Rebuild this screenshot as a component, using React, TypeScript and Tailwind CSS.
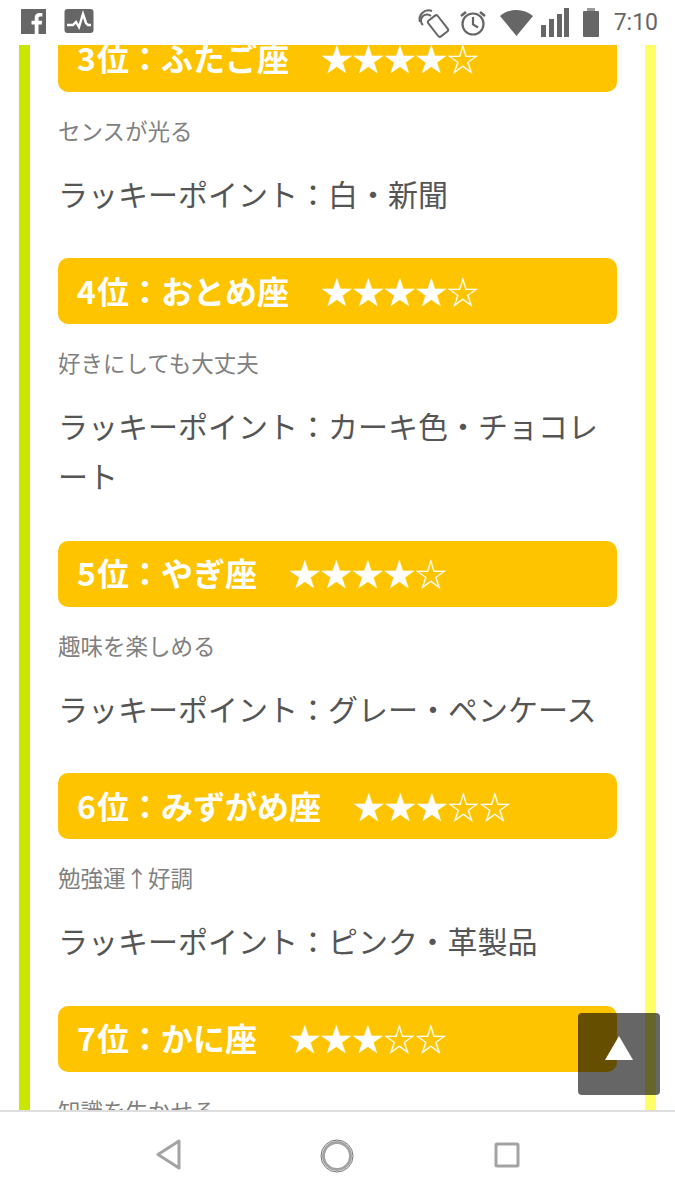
const items = [
  { rank: '3', name: '位：ふたご座', stars: '★★★★☆', sub: 'センスが光る', lucky: '白・新聞' },
  { rank: '4', name: '位：おとめ座', stars: '★★★★☆', sub: '好きにしても大丈夫', lucky: 'カーキ色・チョコレート' },
  { rank: '5', name: '位：やぎ座', stars: '★★★★☆', sub: '趣味を楽しめる', lucky: 'グレー・ペンケース' },
  { rank: '6', name: '位：みずがめ座', stars: '★★★☆☆', sub: '勉強運↑好調', lucky: 'ピンク・革製品' },
  { rank: '7', name: '位：かに座', stars: '★★★☆☆', sub: '知識を生かせる', lucky: '' },
]

function StatusBar() {
  return (
    <div className="h-[45px] flex items-center bg-white pl-[21px] pr-[17px] text-[#666]">
      <svg width="25" height="25" viewBox="0 0 25 25" className="mt-[-2px]">
        <path fill="#666" d="M0 0h25v25h-7.500v-9.500h3.200l.5-3.800h-3.700v-2.400c0-1.100.3-1.800 1.900-1.800h2v-3.400c-.4-.1-1.500-.2-2.900-.2-2.900 0-4.800 1.800-4.800 5v2.800h-3.200v3.800h3.200v9.500h-13.700z" />
      </svg>
      <svg width="30" height="25" viewBox="0 0 30 25" className="ml-[18px] mt-[-2px]">
        <rect width="29" height="24" x="0.500" rx="3" fill="#666" />
        <path d="M3 16h6l3-3 3 5 4-13 3 9 2 2h3" fill="none" stroke="#fff" strokeWidth="2.400" />
      </svg>
      <div className="flex-1" />
      <svg width="32" height="30" viewBox="0 0 32 30" fill="none" stroke="#666" strokeWidth="2" className="mr-[9px]">
        <rect x="14" y="8" width="12" height="20" rx="2" transform="rotate(-38 20 18)" />
        <path d="M5 17a5.500 5.500 0 0 1 8-9" />
        <path d="M2 14a9 9 0 0 1 12-11" />
      </svg>
      <svg width="28" height="30" viewBox="0 0 28 30" fill="none" stroke="#666" strokeWidth="2.200" className="mr-[13px]">
        <circle cx="14" cy="16" r="10.500" />
        <path d="M14 9v7.500l5 3" />
        <path d="M2 8l5-4M26 8l-5-4" strokeWidth="2.600" />
      </svg>
      <svg width="33" height="26" viewBox="0 0 33 26" className="mr-[8px]">
        <path fill="#666" d="M0 6C9-2 24-2 33 6L16.500 26z" />
      </svg>
      <svg width="28" height="30" viewBox="0 0 28 30" className="mr-[14px]">
        <path fill="#666" d="M0 17h5v12H0zM8 11h5v18H8zM16 6h5v23h-5zM23 0h5v29h-5z" />
      </svg>
      <svg width="16" height="30" viewBox="0 0 16 30" className="mr-[15px]">
        <path fill="#999" d="M4 0h8v4H4z" />
        <rect y="3" width="16" height="26" rx="1" fill="#666" />
      </svg>
      <span className="text-[23px] leading-none" style={{ fontFamily: 'Roboto, sans-serif' }}>7:10</span>
    </div>
  )
}

export default function App() {
  return (
    <div
      className="relative w-[675px] h-[1200px] bg-white overflow-hidden"
      style={{ fontFamily: '"Noto Sans CJK JP", sans-serif' }}
    >
      <StatusBar />
      <div className="h-[1065px] overflow-hidden">
        <div className="mx-[19px] h-[1065px] flex flex-col border-l-[11px] border-r-[11px] border-l-[#c8e600] border-r-[#ffff66] bg-white px-[28px]">
          <div className="mt-[-19.500px]">
            {items.map(item => (
              <div key={item.rank} className="mb-[40.600px]">
                <div className="h-[66px] rounded-[10px] bg-[#ffc400] pl-[19px] flex items-center text-white font-bold text-[32px] whitespace-pre">
                  <span className="mt-[-3px] mr-[1px]">{item.rank}</span>
                  <span className="mt-[-3px]">{item.name}</span>
                  <span className="ml-[32px] mt-[-3px] tracking-[-0.500px] font-normal">{item.stars}</span>
                </div>
                <p className="mt-[23px] text-[22.500px] leading-[30px] text-[#808080]">{item.sub}</p>
                {item.lucky && (
                  <p className="mt-[23px] text-[30px] leading-[50px] text-[#555]">ラッキーポイント：{item.lucky}</p>
                )}
              </div>
            ))}
          </div>
        </div>
      </div>
      <div className="h-[90px] border-t-2 border-[#dedede] bg-white flex items-start pt-[27px] pl-[156px]">
        <svg width="26" height="32" viewBox="0 0 26 32" fill="none" stroke="#a3a3a3" strokeWidth="3" strokeLinejoin="round">
          <path d="M23 2v27L2 15.500z" />
        </svg>
        <svg width="34" height="34" viewBox="0 0 34 34" fill="none" className="ml-[138px]">
          <circle cx="17" cy="17" r="16" stroke="#777" strokeWidth="1" />
          <circle cx="17" cy="17" r="13.500" stroke="#a3a3a3" strokeWidth="3" />
        </svg>
        <svg width="26" height="26" viewBox="0 0 26 26" fill="none" stroke="#a3a3a3" strokeWidth="3" className="ml-[140px] mt-[3px]">
          <rect x="2" y="2" width="22" height="22" rx="1" />
        </svg>
      </div>
      <div className="absolute left-[578px] top-[1013px] w-[82px] h-[82px] rounded-[4px] bg-black/60 flex items-center justify-center">
        <svg width="28" height="24" viewBox="0 0 28 24" className="mt-[-12px]">
          <path fill="#fff" d="M14 0l14 24H0z" />
        </svg>
      </div>
    </div>
  )
}
